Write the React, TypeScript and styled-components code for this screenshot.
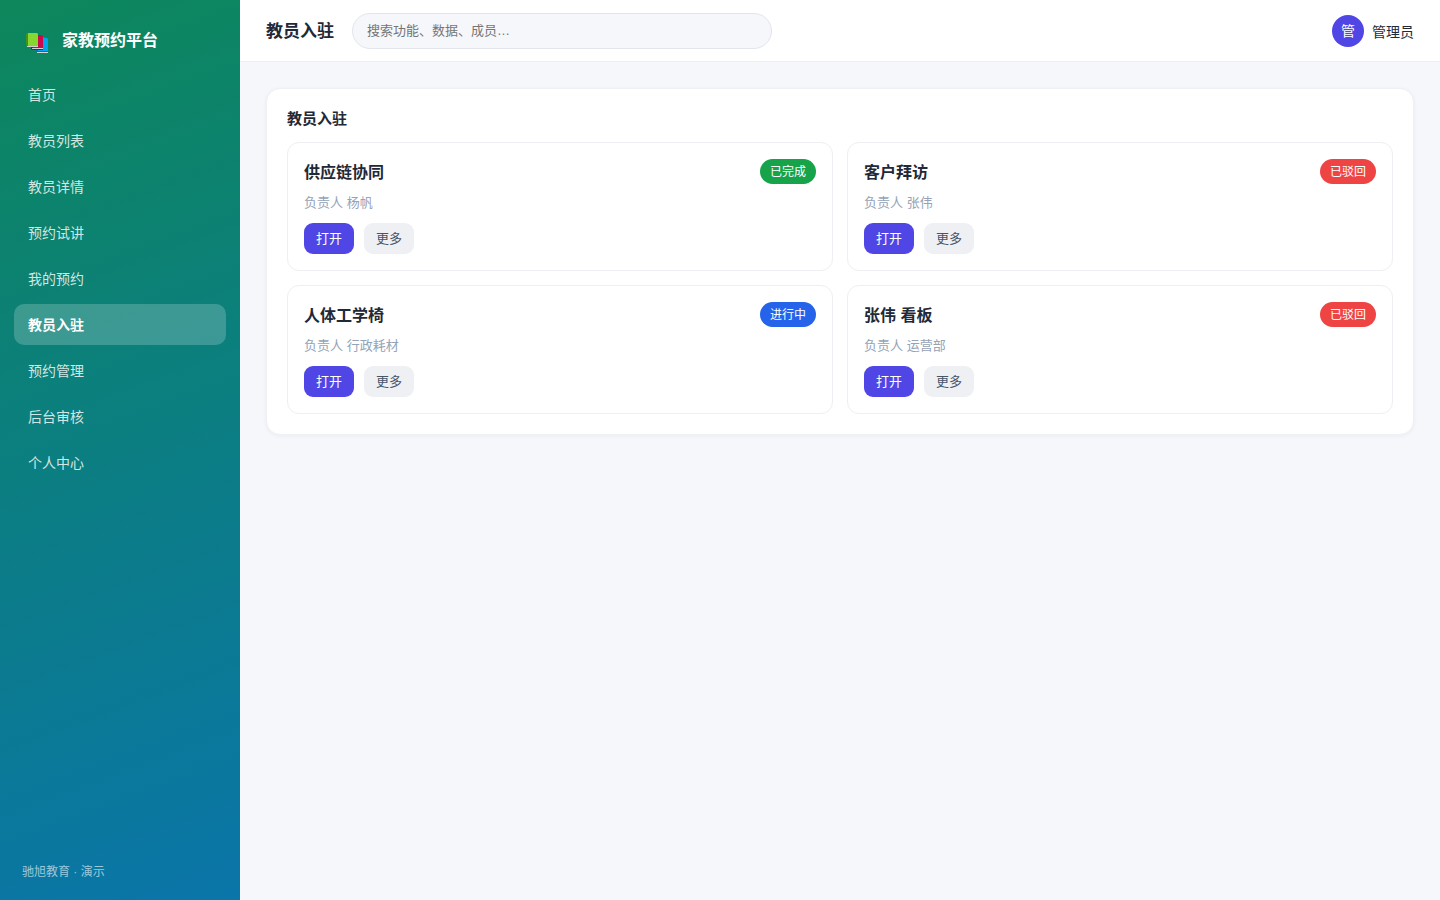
import React from "react";
import styled, { createGlobalStyle } from "styled-components";

const GlobalStyle = createGlobalStyle`
  *, *::before, *::after { box-sizing: border-box; }
  body {
    margin: 0;
    background: #f5f7fb;
    color: #1f2937;
    font-family: "Liberation Sans", "Noto Sans CJK SC", sans-serif;
    font-size: 14px;
  }
  button, input { font-family: inherit; }
  h1, h2, h3, p { margin: 0; }
`;

const Shell = styled.div`
  display: flex;
  min-height: 100vh;
`;

const Sidebar = styled.aside`
  flex: 0 0 240px;
  display: flex;
  flex-direction: column;
  padding: 22px 14px 18px;
  background: linear-gradient(160deg, #0d875b, #0a75a9);
  color: #fff;
`;

const Brand = styled.div`
  display: flex;
  align-items: center;
  gap: 12px;
  height: 34px;
  margin-bottom: 18px;
  padding: 0 12px;
  font-size: 16px;
  font-weight: 700;

  svg { display: block; margin-top: 8px; }
`;

const Nav = styled.nav`
  display: flex;
  flex-direction: column;
  gap: 5px;
`;

const NavLink = styled.a<{ $active?: boolean }>`
  padding: 11px 14px 9px;
  line-height: 21px;
  border-radius: 10px;
  color: ${(p) => (p.$active ? "#fff" : "rgba(255, 255, 255, 0.82)")};
  background: ${(p) => (p.$active ? "rgba(255, 255, 255, 0.2)" : "transparent")};
  font-weight: ${(p) => (p.$active ? 700 : 400)};
  text-decoration: none;
`;

const SideNote = styled.p`
  margin-top: auto;
  padding: 0 8px;
  color: rgba(255, 255, 255, 0.6);
  font-size: 12px;
  line-height: 20px;
`;

const Main = styled.div`
  flex: 1;
  min-width: 0;
`;

const Topbar = styled.header`
  display: flex;
  align-items: center;
  gap: 18px;
  height: 62px;
  padding: 0 26px;
  background: #fff;
  border-bottom: 1px solid #eceef2;
`;

const PageTitle = styled.h1`
  flex: none;
  padding-top: 2px;
  font-size: 17px;
  line-height: 24px;
`;

const Search = styled.input`
  flex: 0 1 420px;
  min-width: 0;
  height: 36px;
  padding: 0 14px;
  border: 1px solid #e2e5ec;
  border-radius: 18px;
  background: #f6f7fb;
  color: #1f2937;
  font-size: 13px;

  &::placeholder { color: #757575; }
`;

const User = styled.div`
  display: flex;
  align-items: center;
  gap: 8px;
  margin-left: auto;
  white-space: nowrap;
`;

const Avatar = styled.span`
  width: 32px;
  border-radius: 50%;
  background: #4f46e5;
  color: #fff;
  line-height: 32px;
  text-align: center;
`;

const Content = styled.main`
  padding: 26px;
`;

const Panel = styled.section`
  padding: 20px;
  border: 1px solid #eef0f4;
  border-radius: 14px;
  background: #fff;
  box-shadow: 0 1px 4px rgba(30, 41, 80, 0.05);
`;

const PanelTitle = styled.h2`
  margin-bottom: 14px;
  font-size: 15px;
  line-height: 19px;
`;

const Grid = styled.div`
  display: grid;
  grid-template-columns: repeat(2, minmax(0, 1fr));
  gap: 14px;
`;

const Card = styled.article`
  padding: 16px;
  border: 1px solid #eeeff2;
  border-radius: 12px;
`;

const CardHead = styled.div`
  display: flex;
  align-items: flex-end;
  justify-content: space-between;
  margin-bottom: 9px;
`;

const CardTitle = styled.h3`
  font-size: 16px;
  line-height: 23px;
`;

const Badge = styled.span<{ $color: string }>`
  padding: 1px 10px 0;
  border-radius: 13px;
  background: ${(p) => p.$color};
  color: #fff;
  font-size: 12px;
  line-height: 24px;
`;

const Owner = styled.p`
  margin-bottom: 11px;
  color: #94a3b8;
  font-size: 13px;
  line-height: 19px;
`;

const Actions = styled.div`
  display: flex;
  gap: 10px;
`;

const Button = styled.button<{ $primary?: boolean }>`
  padding: 0 12px;
  border: 0;
  border-radius: 9px;
  background: ${(p) => (p.$primary ? "#4f46e5" : "#eef0f4")};
  color: ${(p) => (p.$primary ? "#fff" : "#475569")};
  font-size: 13px;
  line-height: 31px;
  cursor: pointer;
`;

const BooksIcon = () => (
  <svg width="24" height="20" viewBox="0 0 24 20" aria-hidden="true">
    <path d="M11 6 17 4.5 21 5l1 1v13H11z" fill="#00a6ed" />
    <path d="M10 17h2v1h10v1H11l-1-1z" fill="#0074ba" />
    <path d="M11 19h11v1H11z" fill="#d3d3d3" />
    <path d="M6 3 12 2h3l2 1v12H6z" fill="#ca0b4a" />
    <path d="M5 14h2v1h10v2H6l-1-1z" fill="#990838" />
    <path d="M6 15h11v1H6z" fill="#d3d3d3" />
    <path d="M0 1 1 0h2v13H1l-1-1z" fill="#44911b" />
    <path d="M2 0h9l1 1v12H2z" fill="#86d72f" />
    <path d="M1 13h11v1H1z" fill="#d3d3d3" />
  </svg>
);

const NAV = ["首页", "教员列表", "教员详情", "预约试讲", "我的预约", "教员入驻", "预约管理", "后台审核", "个人中心"];
const CURRENT = "教员入驻";

const STATUS_COLORS = {
  已完成: "#16a34a",
  进行中: "#2563eb",
  已驳回: "#ef4444",
};

const CARDS: { title: string; owner: string; status: keyof typeof STATUS_COLORS }[] = [
  { title: "供应链协同", owner: "杨帆", status: "已完成" },
  { title: "客户拜访", owner: "张伟", status: "已驳回" },
  { title: "人体工学椅", owner: "行政耗材", status: "进行中" },
  { title: "张伟 看板", owner: "运营部", status: "已驳回" },
];

export default function App() {
  return (
    <>
      <GlobalStyle />
      <Shell lang="zh-CN">
        <Sidebar>
          <Brand>
            <BooksIcon />
            <span>家教预约平台</span>
          </Brand>
          <Nav>
            {NAV.map((name) => (
              <NavLink
                key={name}
                href="#"
                $active={name === CURRENT}
                aria-current={name === CURRENT ? "page" : undefined}
              >
                {name}
              </NavLink>
            ))}
          </Nav>
          <SideNote>驰旭教育 · 演示</SideNote>
        </Sidebar>
        <Main>
          <Topbar>
            <PageTitle>{CURRENT}</PageTitle>
            <Search type="search" aria-label="搜索" placeholder="搜索功能、数据、成员…" />
            <User>
              <Avatar>管</Avatar>
              <span>管理员</span>
            </User>
          </Topbar>
          <Content>
            <Panel>
              <PanelTitle>{CURRENT}</PanelTitle>
              <Grid>
                {CARDS.map((card) => (
                  <Card key={card.title}>
                    <CardHead>
                      <CardTitle>{card.title}</CardTitle>
                      <Badge $color={STATUS_COLORS[card.status]}>{card.status}</Badge>
                    </CardHead>
                    <Owner>负责人 {card.owner}</Owner>
                    <Actions>
                      <Button type="button" $primary>打开</Button>
                      <Button type="button">更多</Button>
                    </Actions>
                  </Card>
                ))}
              </Grid>
            </Panel>
          </Content>
        </Main>
      </Shell>
    </>
  );
}
